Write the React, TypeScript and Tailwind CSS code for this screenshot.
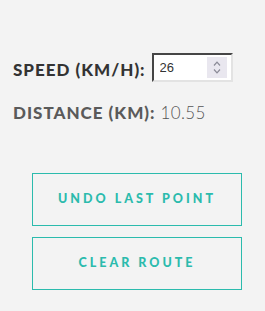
import React, { useState } from 'react';

const App: React.FC = () => {
  const [speed, setSpeed] = useState<string>('26');
  const distance = 10.55;

  return (
    <div className="min-h-screen w-[265px] h-[311px] bg-[#f3f3f3] font-['Lato','Liberation_Sans',sans-serif] overflow-hidden">
      <div className="pt-[52px] pl-[13px]">
        {/* Speed input */}
        <div className="flex items-center">
          <label className="text-[17px] font-black text-[#333333] tracking-[1px] mt-[5px]">SPEED (KM/H):</label>
          <div className="ml-[6px] flex items-center w-[81px] h-[29px] bg-white border-2 [border-style:inset] border-t-[#9a9a9a] border-l-[#9a9a9a] border-b-[#e3e3e3] border-r-[#e3e3e3]">
            <input
              value={speed}
              onChange={(e) => setSpeed(e.target.value)}
              className="w-[50px] pl-[6px] text-[13px] text-[#333] bg-transparent outline-none font-['Liberation_Sans',sans-serif]"
            />
            <div className="ml-auto mr-[4px] w-[20px] h-[21px] bg-[#e9e7ef] flex flex-col items-center justify-center gap-[3px]">
              <svg width="8" height="5" viewBox="0 0 8 5" fill="none" stroke="#8a8a96" strokeWidth="1.2">
                <path d="M1 4.5 L4 1.2 L7 4.5" />
              </svg>
              <svg width="8" height="5" viewBox="0 0 8 5" fill="none" stroke="#8a8a96" strokeWidth="1.2">
                <path d="M1 0.5 L4 3.8 L7 0.5" />
              </svg>
            </div>
          </div>
        </div>

        {/* Distance readout */}
        <div className="mt-[17px] flex items-baseline text-[#5a5a5a]">
          <span className="text-[17px] font-black tracking-[1px]">DISTANCE (KM):</span>
          <span className="ml-[5px] text-[17px] font-light text-[#555] tracking-[0.4px]">{distance.toFixed(2)}</span>
        </div>
      </div>

      {/* Route buttons */}
      <div className="mt-[48px] ml-[32px] w-[210px] flex flex-col gap-[11px]">
        <button className="h-[53px] border border-[#2bbbad] text-[#2bbbad] text-[12.5px] font-black tracking-[3px] uppercase">
          Undo last point
        </button>
        <button className="h-[53px] border border-[#2bbbad] text-[#2bbbad] text-[12.5px] font-black tracking-[3px] uppercase">
          Clear route
        </button>
      </div>
    </div>
  );
};

export default App;
